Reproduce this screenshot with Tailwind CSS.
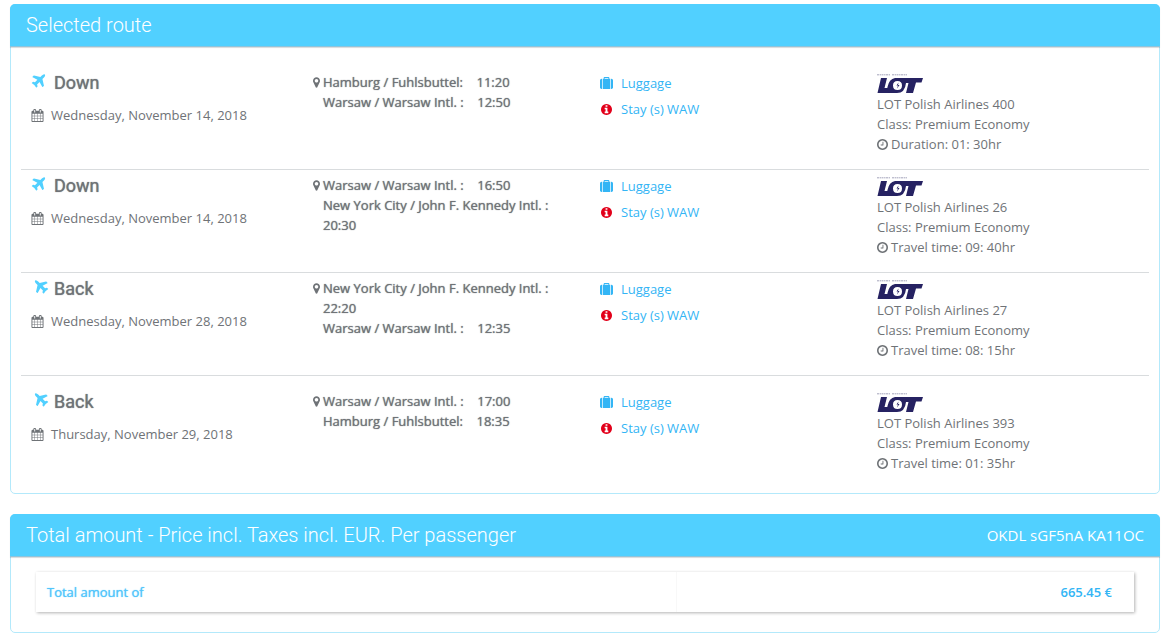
<!DOCTYPE html>
<html lang="en">

<head>
    <meta charset="UTF-8">
    <meta name="viewport" content="width=device-width, initial-scale=1.0">
    <title>Selected route</title>
    <script src="https://cdn.jsdelivr.net/npm/@tailwindcss/browser@4"></script>
</head>

<body class="bg-white font-['Open_Sans',sans-serif] text-[13px] leading-5 text-[#6f7377]">
    <!-- Icons -->
    <svg class="hidden">
        <symbol id="plane" viewBox="0 0 1792 1792"><path d="M1568 160q44 52 12 148t-108 172l-161 161 160 696q5 19-12 33l-128 96q-7 6-19 6-4 0-7-1-15-3-21-16l-279-508-259 259 53 194q5 17-8 31l-96 96q-9 9-23 9h-2q-15-2-24-13l-189-252-252-189q-11-7-13-23-1-13 9-25l96-97q9-9 23-9 6 0 8 1l194 53 259-259-508-279q-14-8-17-24-2-16 9-27l128-128q14-13 30-8l665 159 160-160q76-76 172-108t148 12z" /></symbol>
        <symbol id="calendar" viewBox="0 0 1792 1792"><path d="M192 1664h288v-288h-288v288zm352 0h320v-288h-320v288zm-352-352h288v-320h-288v320zm352 0h320v-320h-320v320zm-352-384h288v-288h-288v288zm736 736h320v-288h-320v288zm-384-736h320v-288h-320v288zm768 736h288v-288h-288v288zm-384-352h320v-320h-320v320zm-352-864v-288q0-13-9.500-22.500t-22.500-9.500h-64q-13 0-22.500 9.500t-9.500 22.500v288q0 13 9.500 22.500t22.500 9.500h64q13 0 22.500-9.500t9.500-22.500zm736 864h288v-320h-288v320zm-384-384h320v-288h-320v288zm384 0h288v-288h-288v288zm32-480v-288q0-13-9.500-22.500t-22.500-9.500h-64q-13 0-22.500 9.500t-9.500 22.500v288q0 13 9.500 22.500t22.500 9.500h64q13 0 22.500-9.500t9.500-22.500zm384-64v1280q0 52-38 90t-90 38h-1408q-52 0-90-38t-38-90v-1280q0-52 38-90t90-38h128v-96q0-66 47-113t113-47h64q66 0 113 47t47 113v96h384v-96q0-66 47-113t113-47h64q66 0 113 47t47 113v96h128q52 0 90 38t38 90z" /></symbol>
        <symbol id="marker" viewBox="384 0 1024 1792"><path d="M1152 640q0-106-75-181t-181-75-181 75-75 181 75 181 181 75 181-75 75-181zm256 0q0 109-33 179l-364 774q-16 33-47.500 52t-67.500 19-67.500-19-46.500-52l-365-774q-33-70-33-179 0-212 150-362t362-150 362 150 150 362z" /></symbol>
        <symbol id="suitcase" viewBox="0 0 1792 1792"><path d="M640 256h512v-128h-512v128zm-352 0v1408h-64q-92 0-158-66t-66-158v-960q0-92 66-158t158-66h64zm1120 0v1408h-1024v-1408h128v-160q0-40 28-68t68-28h576q40 0 68 28t28 68v160h128zm384 224v960q0 92-66 158t-158 66h-64v-1408h64q92 0 158 66t66 158z" /></symbol>
        <symbol id="info" viewBox="128 128 1536 1536"><path d="M1152 1376v-160q0-14-9-23t-23-9h-96v-512q0-14-9-23t-23-9h-320q-14 0-23 9t-9 23v160q0 14 9 23t23 9h96v320h-96q-14 0-23 9t-9 23v160q0 14 9 23t23 9h448q14 0 23-9t9-23zm-128-896v-160q0-14-9-23t-23-9h-192q-14 0-23 9t-9 23v160q0 14 9 23t23 9h192q14 0 23-9t9-23zm640 416q0 209-103 385.500t-279.500 279.500-385.500 103-385.500-103-279.500-279.500-103-385.500 103-385.500 279.500-279.500 385.500-103 385.500 103 279.500 279.500 103 385.500z" /></symbol>
        <symbol id="clock" viewBox="128 128 1536 1536"><path d="M1024 544v448q0 14-9 23t-23 9h-320q-14 0-23-9t-9-23v-64q0-14 9-23t23-9h224v-352q0-14 9-23t23-9h64q14 0 23 9t9 23zm416 352q0-148-73-273t-198-198-273-73-273 73-198 198-73 273 73 273 198 198 273 73 273-73 198-198 73-273zm224 0q0 209-103 385.500t-279.500 279.500-385.500 103-385.500-103-279.500-279.500-103-385.500 103-385.500 279.500-279.500 385.500-103 385.500 103 279.500 279.500 103 385.500z" /></symbol>
        <symbol id="lot" viewBox="0 0 46 20">
            <path fill="none" stroke="#8b8ba8" stroke-width="0.8" stroke-dasharray="2 0.6 1.400 0.5" d="M0 .8h13M15 .8h15" />
            <path d="M4 4h6L7.500 14H16l-1 5H.5z" />
            <path fill-rule="evenodd" d="M18 4h28l-1.500 4.500H39L36 19h-7l2.500-10H29q-1 10-9 10h-7q-4-1-2.500-6Q12 5 18 4zM20.500 7q-4.500 0-4.500 4.500t4.500 4.500 4.500-4.500-4.500-4.500z" />
            <path d="M21.500 8.500l-2 3h1.500l-1 3 2.500-3.500H21z" />
        </symbol>
    </svg>

    <main class="flex flex-col gap-5 pt-1 pr-[5px] pl-[10px]">
        <section class="rounded-[5px] border border-[#b3e9fb] pb-5">
            <header class="-mx-px -mt-px flex h-[43px] items-center rounded-t-[5px] border-b border-[#8fc4dc] bg-[#51d0ff] px-4 shadow-[0_1px_1px_rgba(0,0,0,0.15)]">
                <h1 class="font-[Roboto,sans-serif] text-xl font-light text-white">Selected route</h1>
            </header>

            <div class="mx-[10px] mt-5">
                <article class="grid min-h-[103px] grid-cols-4 border-b border-[#d9dcde] pt-[5px] pb-[14px]">
                    <div class="px-[10px] pt-px">
                        <h2 class="-ml-px flex gap-[7px] font-[Roboto,sans-serif] text-lg leading-5 text-shadow-[0_0_1px_currentColor]"><svg class="size-[17px] fill-[#51d0ff]"><use href="#plane" /></svg>Down</h2>
                        <p class="mt-3 flex items-center gap-[7px]"><svg class="size-[13px] fill-current"><use href="#calendar" /></svg>Wednesday, November 14, 2018</p>
                    </div>
                    <div class="flex items-start gap-[3px] px-[10px] text-shadow-[0_0_1px_currentColor]">
                        <svg class="mt-1 h-[13px] w-[7px] shrink-0 fill-current"><use href="#marker" /></svg>
                        <div>
                            <p>Hamburg / Fuhlsbuttel: &nbsp;&nbsp; 11:20</p>
                            <p>Warsaw / Warsaw Intl. : &nbsp;&nbsp; 12:50</p>
                        </div>
                    </div>
                    <div class="flex flex-col items-start gap-[6px] px-[15px] pt-px text-[#33b5f5]">
                        <a href="#" class="flex items-center gap-2"><svg class="size-[13px] fill-current"><use href="#suitcase" /></svg>Luggage</a>
                        <a href="#" class="flex items-center gap-2"><svg class="h-[11px] w-[13px] fill-[#e2001a]"><use href="#info" /></svg>Stay (s) WAW</a>
                    </div>
                    <div class="px-[10px]">
                        <svg class="mt-[2px] h-5 w-[46px] fill-[#262262]" role="img" aria-label="LOT"><use href="#lot" /></svg>
                        <p>LOT Polish Airlines 400</p>
                        <p>Class: Premium Economy</p>
                        <p class="flex items-center gap-[3px]"><svg class="size-[11px] fill-current"><use href="#clock" /></svg>Duration: 01: 30hr</p>
                    </div>
                </article>

                <article class="grid min-h-[103px] grid-cols-4 border-b border-[#d9dcde] pt-[5px] pb-[14px]">
                    <div class="px-[10px] pt-px">
                        <h2 class="-ml-px flex gap-[7px] font-[Roboto,sans-serif] text-lg leading-5 text-shadow-[0_0_1px_currentColor]"><svg class="size-[17px] fill-[#51d0ff]"><use href="#plane" /></svg>Down</h2>
                        <p class="mt-3 flex items-center gap-[7px]"><svg class="size-[13px] fill-current"><use href="#calendar" /></svg>Wednesday, November 14, 2018</p>
                    </div>
                    <div class="flex items-start gap-[3px] px-[10px] text-shadow-[0_0_1px_currentColor]">
                        <svg class="mt-1 h-[13px] w-[7px] shrink-0 fill-current"><use href="#marker" /></svg>
                        <div>
                            <p>Warsaw / Warsaw Intl. : &nbsp;&nbsp; 16:50</p>
                            <p>New York City / John F. Kennedy Intl. : &nbsp;&nbsp; 20:30</p>
                        </div>
                    </div>
                    <div class="flex flex-col items-start gap-[6px] px-[15px] pt-px text-[#33b5f5]">
                        <a href="#" class="flex items-center gap-2"><svg class="size-[13px] fill-current"><use href="#suitcase" /></svg>Luggage</a>
                        <a href="#" class="flex items-center gap-2"><svg class="h-[11px] w-[13px] fill-[#e2001a]"><use href="#info" /></svg>Stay (s) WAW</a>
                    </div>
                    <div class="px-[10px]">
                        <svg class="mt-[2px] h-5 w-[46px] fill-[#262262]" role="img" aria-label="LOT"><use href="#lot" /></svg>
                        <p>LOT Polish Airlines 26</p>
                        <p>Class: Premium Economy</p>
                        <p class="flex items-center gap-[3px]"><svg class="size-[11px] fill-current"><use href="#clock" /></svg>Travel time: 09: 40hr</p>
                    </div>
                </article>

                <article class="grid min-h-[103px] grid-cols-4 border-b border-[#d9dcde] pt-[5px] pb-[14px]">
                    <div class="px-[10px] pt-px">
                        <h2 class="flex gap-1 pl-[2px] font-[Roboto,sans-serif] text-lg leading-5 text-shadow-[0_0_1px_currentColor]"><svg class="size-[17px] -scale-x-100 fill-[#51d0ff]"><use href="#plane" /></svg>Back</h2>
                        <p class="mt-3 flex items-center gap-[7px]"><svg class="size-[13px] fill-current"><use href="#calendar" /></svg>Wednesday, November 28, 2018</p>
                    </div>
                    <div class="flex items-start gap-[3px] px-[10px] text-shadow-[0_0_1px_currentColor]">
                        <svg class="mt-1 h-[13px] w-[7px] shrink-0 fill-current"><use href="#marker" /></svg>
                        <div>
                            <p>New York City / John F. Kennedy Intl. : &nbsp;&nbsp; 22:20</p>
                            <p>Warsaw / Warsaw Intl. : &nbsp;&nbsp; 12:35</p>
                        </div>
                    </div>
                    <div class="flex flex-col items-start gap-[6px] px-[15px] pt-px text-[#33b5f5]">
                        <a href="#" class="flex items-center gap-2"><svg class="size-[13px] fill-current"><use href="#suitcase" /></svg>Luggage</a>
                        <a href="#" class="flex items-center gap-2"><svg class="h-[11px] w-[13px] fill-[#e2001a]"><use href="#info" /></svg>Stay (s) WAW</a>
                    </div>
                    <div class="px-[10px]">
                        <svg class="mt-[2px] h-5 w-[46px] fill-[#262262]" role="img" aria-label="LOT"><use href="#lot" /></svg>
                        <p>LOT Polish Airlines 27</p>
                        <p>Class: Premium Economy</p>
                        <p class="flex items-center gap-[3px]"><svg class="size-[11px] fill-current"><use href="#clock" /></svg>Travel time: 08: 15hr</p>
                    </div>
                </article>

                <article class="mt-[10px] grid grid-cols-4 pt-[5px]">
                    <div class="px-[10px] pt-px">
                        <h2 class="flex gap-1 pl-[2px] font-[Roboto,sans-serif] text-lg leading-5 text-shadow-[0_0_1px_currentColor]"><svg class="size-[17px] -scale-x-100 fill-[#51d0ff]"><use href="#plane" /></svg>Back</h2>
                        <p class="mt-3 flex items-center gap-[7px]"><svg class="size-[13px] fill-current"><use href="#calendar" /></svg>Thursday, November 29, 2018</p>
                    </div>
                    <div class="flex items-start gap-[3px] px-[10px] text-shadow-[0_0_1px_currentColor]">
                        <svg class="mt-1 h-[13px] w-[7px] shrink-0 fill-current"><use href="#marker" /></svg>
                        <div>
                            <p>Warsaw / Warsaw Intl. : &nbsp;&nbsp; 17:00</p>
                            <p>Hamburg / Fuhlsbuttel: &nbsp;&nbsp; 18:35</p>
                        </div>
                    </div>
                    <div class="flex flex-col items-start gap-[6px] px-[15px] pt-px text-[#33b5f5]">
                        <a href="#" class="flex items-center gap-2"><svg class="size-[13px] fill-current"><use href="#suitcase" /></svg>Luggage</a>
                        <a href="#" class="flex items-center gap-2"><svg class="h-[11px] w-[13px] fill-[#e2001a]"><use href="#info" /></svg>Stay (s) WAW</a>
                    </div>
                    <div class="px-[10px]">
                        <svg class="mt-[2px] h-5 w-[46px] fill-[#262262]" role="img" aria-label="LOT"><use href="#lot" /></svg>
                        <p>LOT Polish Airlines 393</p>
                        <p>Class: Premium Economy</p>
                        <p class="flex items-center gap-[3px]"><svg class="size-[11px] fill-current"><use href="#clock" /></svg>Travel time: 01: 35hr</p>
                    </div>
                </article>
            </div>
        </section>

        <section class="rounded-[5px] border border-[#b3e9fb] pb-5">
            <header class="-mx-px -mt-px flex h-[43px] items-center justify-between rounded-t-[5px] border-b border-[#8fc4dc] bg-[#51d0ff] px-4 text-white shadow-[0_1px_1px_rgba(0,0,0,0.15)]">
                <h2 class="font-[Roboto,sans-serif] text-xl font-light">Total amount - Price incl. Taxes incl. EUR. Per passenger</h2>
                <span class="text-[15px]">OKDL sGF5nA KA11OC</span>
            </header>
            <div class="mx-[25px] mt-[15px] shadow-[1px_1px_3px_rgba(0,0,0,0.3)]">
                <table class="w-full text-left text-[#51c5fb] text-shadow-[0_0_1px_currentColor]">
                    <tbody>
                        <tr class="h-10">
                            <th scope="row" class="w-7/12 pl-[11px] font-normal">Total amount of</th>
                            <td class="border-l border-[#f8f8f8] pr-[22px] text-right font-semibold text-[#33b5f5] text-shadow-none">665.45 €</td>
                        </tr>
                    </tbody>
                </table>
            </div>
        </section>
    </main>
</body>

</html>
